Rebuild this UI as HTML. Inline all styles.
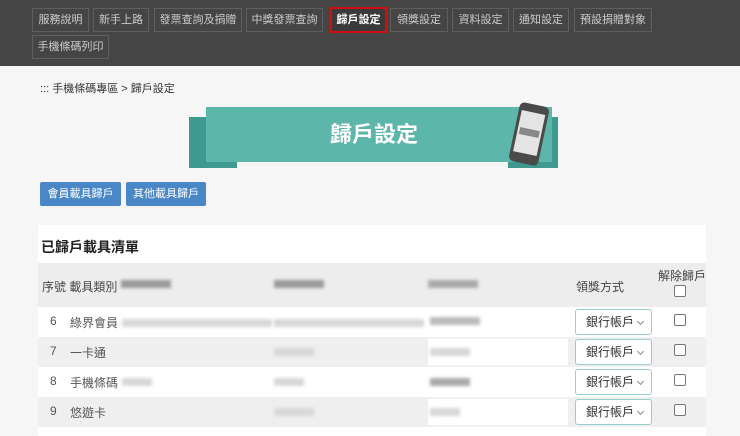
<!DOCTYPE html>
<html><head><meta charset="utf-8"><style>
*{box-sizing:border-box;margin:0;padding:0}
body{width:740px;height:436px;overflow:hidden;background:#f6f6f6;font-family:"Liberation Sans","Noto Sans CJK TC",sans-serif;color:#333;position:relative}
.nav{position:absolute;left:0;top:0;width:740px;height:66px;background:#454545}
.b{position:absolute;height:24px;border:1px solid #5e5e5e;color:#ccc;font-size:11px;line-height:22px;text-align:center}
.b.on{border:2px solid #d01010;color:#fff;font-weight:bold;line-height:20px;background:#3a3a3a}
.abs{position:absolute}
.blue{position:absolute;top:182px;height:24px;background:#4a87c6;color:#fff;font-size:11px;line-height:24px;text-align:center;border-radius:2px}
.card{position:absolute;left:38px;top:225px;width:668px;height:211px;background:#fff}
.row{position:absolute;left:38px;width:668px;height:30px;font-size:12px;color:#555}
.row span{position:absolute;top:7px}
.sel{position:absolute;left:537px;top:2px;width:77px;height:26px;border:1px solid #9cc;border-radius:3px;background:#fff;font-size:12px;line-height:24px;padding-left:10px;color:#333}
.sel:after{content:"";position:absolute;right:8px;top:9px;width:4px;height:4px;border-right:1px solid #888;border-bottom:1px solid #888;transform:rotate(45deg)}
.cb{position:absolute;left:636px;top:7px;width:12px;height:12px;border:1px solid #777;border-radius:2px;background:#fff}
.blur{position:absolute;height:8px;background:#d8d8d8;filter:blur(1.5px)}
</style></head><body>
<div class="nav">
<div class="b" style="left:32px;top:8px;width:57px">服務說明</div>
<div class="b" style="left:93px;top:8px;width:56px">新手上路</div>
<div class="b" style="left:154px;top:8px;width:88px">發票查詢及捐贈</div>
<div class="b" style="left:246px;top:8px;width:77px">中獎發票查詢</div>
<div class="b on" style="left:330px;top:7px;width:57px;height:26px;line-height:22px">歸戶設定</div>
<div class="b" style="left:390px;top:8px;width:58px">領獎設定</div>
<div class="b" style="left:452px;top:8px;width:57px">資料設定</div>
<div class="b" style="left:513px;top:8px;width:56px">通知設定</div>
<div class="b" style="left:574px;top:8px;width:78px">預設捐贈對象</div>
<div class="b" style="left:32px;top:35px;width:77px">手機條碼列印</div>
</div>
<div class="abs" style="left:40px;top:80px;font-size:11px;color:#333">::: 手機條碼專區 &gt; 歸戶設定</div>
<div class="abs" style="left:189px;top:117px;width:48px;height:51px;background:#3e9a8e"></div>
<div class="abs" style="left:508px;top:117px;width:50px;height:51px;background:#3e9a8e"></div>
<div class="abs" style="left:206px;top:107px;width:346px;height:55px;background:#5cb6aa;color:#fff;font-size:22px;font-weight:bold;line-height:55px;text-align:center;padding-right:10px">歸戶設定</div>
<div class="abs" style="left:514px;top:104px;width:30px;height:60px;background:#4a4a4a;border-radius:5px;transform:rotate(12deg)"><div style="margin:8px 3px;height:42px;background:#e4e4e4"><div style="position:relative;top:17px;height:7px;background:#888;margin:0 2px"></div></div></div>
<div class="blue" style="left:40px;width:81px">會員載具歸戶</div>
<div class="blue" style="left:126px;width:80px">其他載具歸戶</div>
<div class="card"></div>
<div class="abs" style="left:41px;top:237px;font-size:14px;font-weight:bold;color:#222">已歸戶載具清單</div>
<div class="abs" style="left:38px;top:263px;width:668px;height:44px;background:#ededed;font-size:12px;color:#444">
<span class="abs" style="left:4px;top:15px">序號 載具類別</span>
<div class="blur" style="left:83px;top:17px;width:50px;background:#999"></div>
<div class="blur" style="left:236px;top:17px;width:50px;background:#999"></div>
<div class="blur" style="left:390px;top:17px;width:50px;background:#aaa"></div>
<span class="abs" style="left:538px;top:15px">領獎方式</span>
<span class="abs" style="left:620px;top:4px">解除歸戶</span>
<div class="cb" style="top:22px"></div>
</div>
<div class="row" style="top:307px;background:#fff"><span style="left:12px">6</span><span style="left:32px">綠界會員</span><div class="blur" style="left:84px;top:12px;width:150px"></div><div class="blur" style="left:236px;top:12px;width:150px"></div><div class="blur" style="left:392px;top:10px;width:50px;background:#bbb"></div><div class="sel">銀行帳戶</div><div class="cb"></div></div>
<div class="row" style="top:337px;background:#efefef"><span style="left:12px">7</span><span style="left:32px">一卡通</span><div class="blur" style="left:236px;top:11px;width:40px"></div><div class="abs" style="left:390px;top:2px;width:140px;height:26px;background:#fff"></div><div class="blur" style="left:392px;top:11px;width:40px"></div><div class="sel">銀行帳戶</div><div class="cb"></div></div>
<div class="row" style="top:367px;background:#fff"><span style="left:12px">8</span><span style="left:32px">手機條碼</span><div class="blur" style="left:84px;top:11px;width:30px"></div><div class="blur" style="left:236px;top:11px;width:30px"></div><div class="blur" style="left:392px;top:11px;width:40px;background:#aaa"></div><div class="sel">銀行帳戶</div><div class="cb"></div></div>
<div class="row" style="top:397px;background:#efefef"><span style="left:12px">9</span><span style="left:32px">悠遊卡</span><div class="blur" style="left:236px;top:11px;width:40px"></div><div class="abs" style="left:390px;top:2px;width:140px;height:26px;background:#fff"></div><div class="blur" style="left:392px;top:11px;width:30px"></div><div class="sel">銀行帳戶</div><div class="cb"></div></div>
</body></html>
